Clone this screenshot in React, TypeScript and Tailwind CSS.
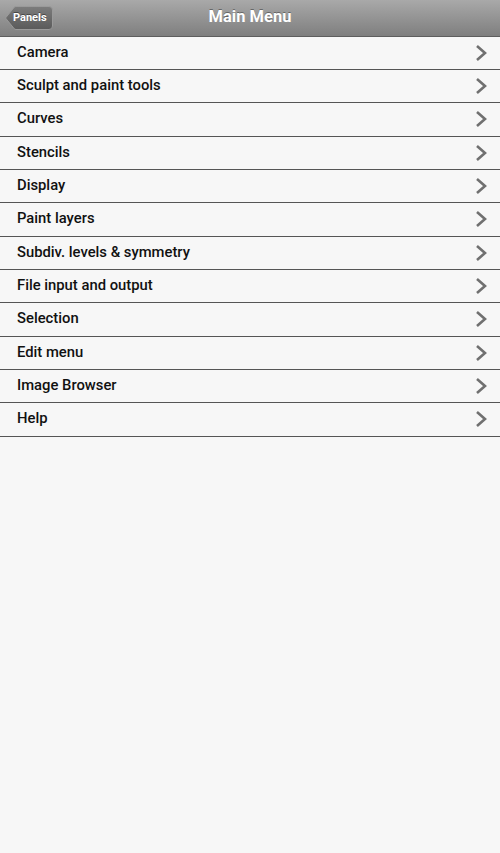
import React from 'react';

const items = [
  'Camera',
  'Sculpt and paint tools',
  'Curves',
  'Stencils',
  'Display',
  'Paint layers',
  'Subdiv. levels & symmetry',
  'File input and output',
  'Selection',
  'Edit menu',
  'Image Browser',
  'Help',
];

function Chevron() {
  return (
    <svg width="14" height="18" viewBox="0 0 14 18" className="shrink-0">
      <path d="M3 2 L11 9 L3 16" fill="none" stroke="#707070" strokeWidth="2.6" strokeLinecap="butt" strokeLinejoin="miter" />
    </svg>
  );
}

function BackButton() {
  return (
    <div className="relative h-[24px] w-[48px]">
      <svg width="48" height="24" viewBox="0 0 48 24" className="absolute inset-0">
        <defs>
          <linearGradient id="bb" x1="0" y1="0" x2="0" y2="1">
            <stop offset="0" stopColor="#7c7c7c" />
            <stop offset="1" stopColor="#5a5a5a" />
          </linearGradient>
        </defs>
        <path
          d="M0.5 12 L9 1.5 Q9.8 0.5 11 0.5 L44 0.5 Q47.5 0.5 47.5 4 L47.5 20 Q47.5 23.5 44 23.5 L11 23.5 Q9.8 23.5 9 22.5 Z"
          fill="url(#bb)"
          stroke="#9a9a9a"
          strokeWidth="1"
        />
      </svg>
      <span className="relative flex h-full items-center pl-[8px] text-[11px] font-bold text-white [text-shadow:0_-1px_0_rgba(0,0,0,0.4)]">
        Panels
      </span>
    </div>
  );
}

export default function App() {
  return (
    <div className="min-h-[853px] w-[500px] bg-[#f7f7f7] font-['Roboto',sans-serif]">
      <header className="relative flex h-[36.67px] items-center justify-center border-b border-[#5e5e5e] bg-gradient-to-b from-[#a9a9a9] to-[#7f7f7f]">
        <div className="absolute left-[5px] top-[6px]">
          <BackButton />
        </div>
        <h1 className="text-[16.5px] font-bold text-white [text-shadow:0_-1px_0_rgba(0,0,0,0.35)]">Main Menu</h1>
      </header>
      <ul>
        {items.map((item) => (
          <li
            key={item}
            className="flex h-[33.33px] items-center justify-between border-b border-[#555] pl-[17px] pr-[12px]"
          >
            <span className="pb-[2px] text-[14.8px] font-medium text-[#111]">{item}</span>
            <Chevron />
          </li>
        ))}
      </ul>
    </div>
  );
}
